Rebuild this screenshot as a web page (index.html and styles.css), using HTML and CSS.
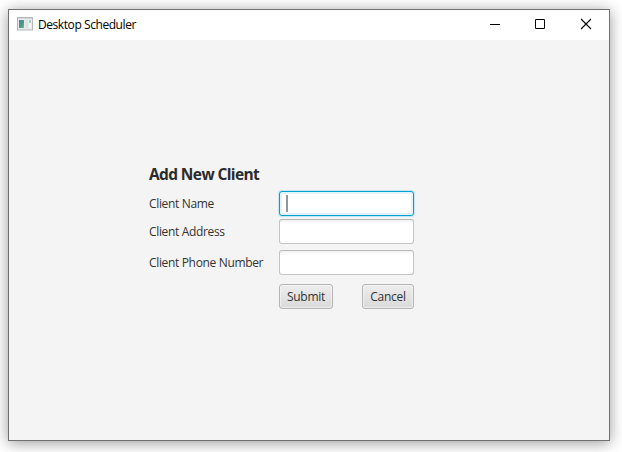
FILE: index.html
```html
<!DOCTYPE html>
<html lang="en">
<head>
<meta charset="utf-8">
<title>Desktop Scheduler</title>
<link rel="stylesheet" href="styles.css">
</head>
<body>
<main class="window">
  <header class="titlebar">
    <svg class="app-icon" width="16" height="14" viewBox="0 0 16 14">
      <defs>
        <linearGradient id="pane" x1="0" y1="0" x2="1" y2="1">
          <stop offset="0" stop-color="#4c7ca8"/>
          <stop offset=".55" stop-color="#4b9a86"/>
          <stop offset="1" stop-color="#79b98e"/>
        </linearGradient>
      </defs>
      <rect x=".5" y=".5" width="15" height="12.5" fill="#e9ebed" stroke="#b4b8bd"/>
      <path d="M1 1.5h14" stroke="#d2d6db"/>
      <rect x="2" y="3" width="5" height="8" fill="url(#pane)"/>
      <rect x="8" y="3" width="3" height="8" fill="#dfe1e4"/>
      <rect x="12" y="3" width="2" height="3" fill="#a9cfc5"/>
      <rect x="12" y="6" width="2" height="5" fill="#f6f7f8"/>
    </svg>
    <span class="caption">Desktop Scheduler</span>
    <div class="controls">
      <svg class="minimize" width="10" height="10" viewBox="0 0 10 10"><path d="M0 5.5h10" stroke="#000"/></svg>
      <svg width="10" height="10" viewBox="0 0 10 10"><path d="M.5 .5h9v9h-9z" fill="none" stroke="#000"/></svg>
      <svg width="10" height="10" viewBox="0 0 10 10"><path d="M0 0l10 10M10 0L0 10" stroke="#000" stroke-width="1.1"/></svg>
    </div>
  </header>
  <form class="client-form">
    <h1 class="heading">Add New Client</h1>
    <label class="label">Client Name</label>
    <div class="field focused"><i class="caret"></i></div>
    <label class="label">Client Address</label>
    <div class="field"></div>
    <label class="label">Client Phone Number</label>
    <div class="field"></div>
    <div class="actions">
      <button class="button submit" type="button">Submit</button>
      <button class="button cancel" type="button">Cancel</button>
    </div>
  </form>
</main>
</body>
</html>
```
FILE: styles.css
```css
* { box-sizing: border-box; }
body {
  margin: 0;
  padding: 9px 0 0 8px;
  height: 452px;
  overflow: hidden;
  background: #fff;
  font: 12px/16px "Open Sans", "Noto Sans", sans-serif;
}
.window {
  width: 602px;
  height: 432px;
  border: 1px solid #707070;
  background: #f4f4f4;
  box-shadow: 0 2px 14px rgba(0, 0, 0, .4);
}
.titlebar {
  display: flex;
  align-items: center;
  height: 30px;
  padding: 0 18px 0 8px;
  background: #fff;
}
.app-icon { margin: 0 5px 2px 0; }
.caption { color: #000; letter-spacing: -.43px; white-space: nowrap; }
.controls { display: flex; gap: 36px; margin: 0 0 2px auto; }
.controls svg { display: block; }
.controls svg:last-child { overflow: visible; }
.controls .minimize { margin-right: -1px; }
.client-form {
  display: grid;
  grid-template-columns: 130px 135px;
  grid-template-rows: 27px 28px 31px 34px 25px;
  padding: 124px 0 0 140px;
  color: #333;
}
.heading {
  grid-column: 1 / 3;
  margin: 0;
  font-size: 15.5px;
  line-height: 20px;
  font-weight: 700;
  letter-spacing: -.62px;
  color: #2b2b2b;
}
.label { line-height: 25px; letter-spacing: -.34px; white-space: nowrap; }
.field {
  height: 25px;
  padding: 3px 6px;
  border: 1px solid #c4c4c4;
  border-top-color: #b9b9b9;
  border-radius: 3px;
  background: linear-gradient(#f1f1f1, #fff 4px);
}
.focused {
  border-color: #039ed3;
  background: #fff;
  box-shadow: 0 0 0 1px #c3e6f1, inset 0 0 0 2px #e2f4fa;
}
.caret { display: block; width: 2px; height: 17px; background: #969696; }
.actions { grid-column: 2; display: flex; justify-content: space-between; }
.button {
  height: 25px;
  padding: 0;
  border: 1px solid #b5b5b5;
  border-radius: 3px;
  background: linear-gradient(#ededed, #dadada);
  box-shadow: inset 0 0 0 1px rgba(255, 255, 255, .45);
  color: #333;
  font: inherit;
  letter-spacing: -.25px;
}
.submit { width: 54px; }
.cancel { width: 52px; }
```
